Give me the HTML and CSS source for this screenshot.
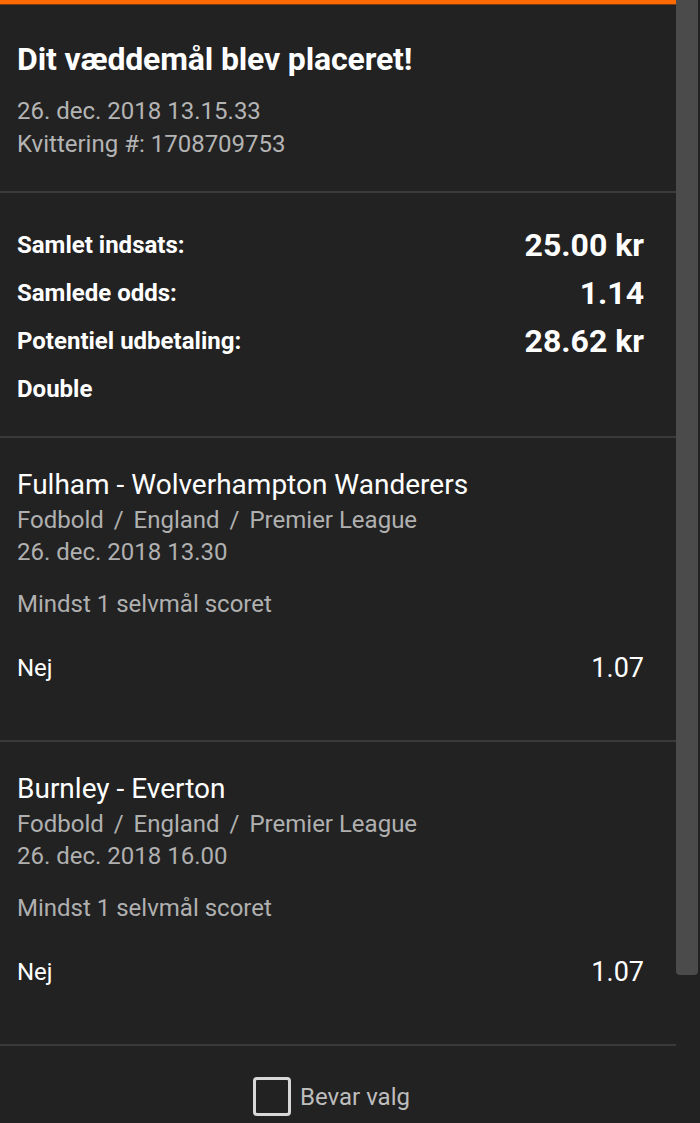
FILE: index.html
```html
<!DOCTYPE html>
<html lang="da">
<head>
<meta charset="utf-8">
<title>Kvittering</title>
<link rel="stylesheet" href="styles.css">
</head>
<body>
<div class="screen">
  <main class="receipt">
    <div class="accent"></div>
    <section class="head">
      <h1 class="title">Dit væddemål blev placeret!</h1>
      <div class="meta">26. dec. 2018 13.15.33</div>
      <div class="meta">Kvittering #: 1708709753</div>
    </section>
    <section class="summary">
      <div class="row"><span class="label">Samlet indsats:</span><span class="value">25.00 kr</span></div>
      <div class="row"><span class="label">Samlede odds:</span><span class="value">1.14</span></div>
      <div class="row"><span class="label">Potentiel udbetaling:</span><span class="value">28.62 kr</span></div>
      <div class="row"><span class="label">Double</span></div>
    </section>
    <section class="event">
      <div class="event-name">Fulham - Wolverhampton Wanderers</div>
      <div class="event-sub">Fodbold <span class="sep">/</span> England <span class="sep">/</span> Premier League</div>
      <div class="event-sub">26. dec. 2018 13.30</div>
      <div class="market">Mindst 1 selvmål scoret</div>
      <div class="pick"><span>Nej</span><span class="odds">1.07</span></div>
    </section>
    <section class="event">
      <div class="event-name">Burnley - Everton</div>
      <div class="event-sub">Fodbold <span class="sep">/</span> England <span class="sep">/</span> Premier League</div>
      <div class="event-sub">26. dec. 2018 16.00</div>
      <div class="market">Mindst 1 selvmål scoret</div>
      <div class="pick"><span>Nej</span><span class="odds">1.07</span></div>
    </section>
    <footer class="foot">
      <label class="keep"><span class="box"></span><span class="keep-text">Bevar valg</span></label>
    </footer>
  </main>
  <div class="scrollbar"><div class="thumb"></div></div>
</div>
</body>
</html>
```

FILE: styles.css
```css
* { box-sizing: border-box; }
html, body { margin: 0; padding: 0; }
body {
  background: #222222;
  color: #ffffff;
  font-family: Roboto, "Liberation Sans", sans-serif;
  width: 700px;
  height: 1123px;
  overflow: hidden;
}
.screen {
  display: flex;
  width: 700px;
  height: 1123px;
}
.receipt {
  width: 676px;
  flex: none;
  display: flex;
  flex-direction: column;
}
.accent {
  height: 5px;
  background: #ff6a00;
  border-bottom: 1px solid #7a3a10;
}
.head {
  padding: 36px 32px 30px 17px;
  border-bottom: 2px solid #3a3a3a;
}
.title {
  margin: 0 0 18px 0;
  font-size: 32px;
  line-height: 36px;
  font-weight: 700;
  letter-spacing: -0.15px;
}
.meta {
  font-size: 24px;
  line-height: 33px;
  color: #b4b4b4;
}
.summary {
  padding: 28px 32px 23px 17px;
  border-bottom: 2px solid #3a3a3a;
}
.row {
  display: flex;
  justify-content: space-between;
  align-items: center;
  height: 48px;
}
.label {
  font-size: 24px;
  font-weight: 700;
}
.value {
  font-size: 32px;
  font-weight: 700;
}
.event {
  padding: 30px 32px 56px 17px;
  border-bottom: 2px solid #3a3a3a;
}
.event-name {
  font-size: 28px;
  line-height: 34px;
  margin-bottom: 2px;
}
.event-sub {
  font-size: 24px;
  line-height: 32px;
  color: #b0b0b0;
}
.sep { margin: 0 4px; }
.market {
  margin-top: 20px;
  font-size: 24px;
  line-height: 32px;
  color: #b0b0b0;
}
.pick {
  margin-top: 32px;
  display: flex;
  justify-content: space-between;
  align-items: center;
  height: 32px;
  font-size: 24px;
}
.odds {
  font-size: 27px;
}
.foot {
  display: flex;
  justify-content: center;
  padding: 31px 13px 0 0;
}
.keep {
  display: flex;
  align-items: center;
  gap: 9px;
}
.box {
  width: 38px;
  height: 39px;
  border: 3px solid #d8d8d8;
  border-radius: 4px;
}
.keep-text {
  font-size: 24px;
  color: #bdbdbd;
}
.scrollbar {
  width: 24px;
  flex: none;
}
.thumb {
  width: 22px;
  height: 975px;
  background: #4b4b4b;
  border-radius: 0 0 4px 4px;
}
```
